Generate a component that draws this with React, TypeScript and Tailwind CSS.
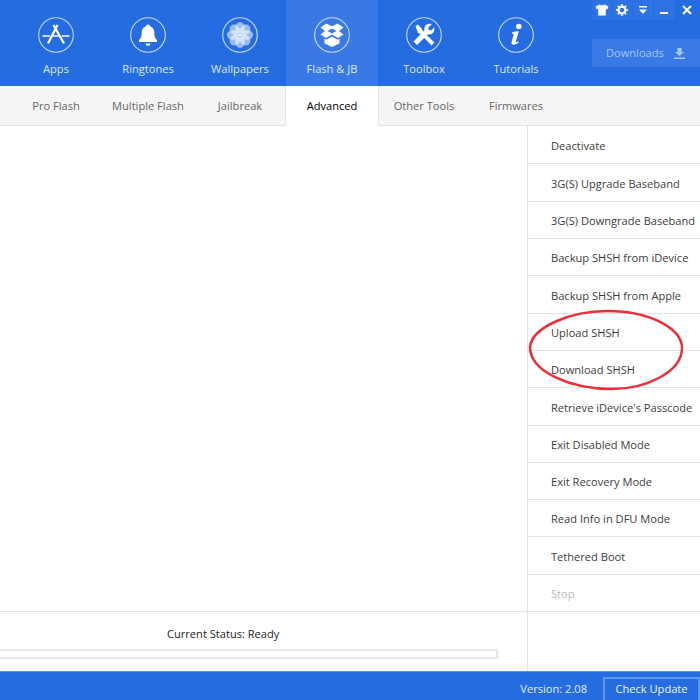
import type { ReactNode } from "react"

const font = "font-['Open_Sans','Noto_Sans',sans-serif]"

function Ring({ children }: { children: ReactNode }) {
  return (
    <svg viewBox="0 0 36 36" className="h-9 w-9">
      <circle cx="18" cy="18" r="17.3" fill="none" stroke="#c4d8f8" strokeWidth="1.1" />
      {children}
    </svg>
  )
}

const AppsIcon = (
  <Ring>
    <path d="M19.5 8 10 26.500M15.500 8 26 26.500" stroke="#fff" strokeWidth="2.300" fill="none" />
    <path d="M4.500 19h7.500M15 19h6M24 19h7.500" stroke="#fff" strokeWidth="1.600" fill="none" />
  </Ring>
)

const BellIcon = (
  <Ring>
    <path d="M18 7.500c1.200 0 2 .8 2 1.800 3 .9 4.300 3.300 4.300 6.200 0 3.500.7 6 2.700 7.500v2H9v-2c2-1.500 2.700-4 2.700-7.500 0-2.900 1.300-5.300 4.300-6.200 0-1 .8-1.800 2-1.800Z" fill="#fff" />
    <path d="M15.500 26.500h5a2.500 2.200 0 0 1-5 0Z" fill="#fff" />
  </Ring>
)

const FlowerIcon = (
  <Ring>
    {[0, 45, 90, 135, 180, 225, 270, 315].map((a) => (
      <ellipse key={a} cx="18" cy="10.800" rx="4.800" ry="5.800" fill="#fff" fillOpacity="0.55" transform={"rotate(" + a + " 18 18)"} />
    ))}
    <circle cx="18" cy="18" r="3.500" fill="#dbe7fb" fillOpacity="0.5" />
    <circle cx="18" cy="18" r="1.300" fill="#fff" />
  </Ring>
)

const BoxIcon = (
  <Ring>
    <path d="m12.500 6.500 5.500 3 5.500-3 6 4-4.500 3.500 4.500 3.500-5.500 3.500-6-3.500-6 3.500-5.500-3.500 4.500-3.500-4.500-3.500Zm5.500 5-4.500 2.500 4.500 2.500 4.500-2.500Z" fill="#fff" fillRule="evenodd" />
    <path d="m10.500 21.500 2 1.200 5.500-3.200 5.500 3.200 2-1.200v5L18 30l-7.500-3.500Z" fill="#fff" />
  </Ring>
)

const ToolsIcon = (
  <Ring>
    <path d="M9.500 9 12 7.500l4 4.500 1 2.500 11.500 11-3 3-11-11.500-2.500-1Z" fill="#fff" />
    <path d="M28.500 10 25 13.500l-2.300-.5-.5-2.300 3.500-3.500c-2.700-1-5.800.2-7 2.700-.5 1.200-.6 2.500-.3 3.500L7.500 24.500l3.500 3.500 11-10.700c1.100.3 2.400.2 3.500-.3 2.700-1.200 3.500-4.500 2.500-7Z" fill="#fff" />
  </Ring>
)

const InfoIcon = (
  <Ring>
    <circle cx="20.800" cy="9.500" r="2.800" fill="#fff" />
    <path d="M14 15.500c2.200-1 4.500-1.400 6.800-1.300l-2.900 10.300c-.2.900.5 1 1.200.5l1.200-.8.600.8c-1.600 1.700-3.500 2.700-5.300 2.700-1.700 0-2.500-1-2-2.700l2-7.500c.2-.8-.4-1-1.700-.8Z" fill="#fff" />
  </Ring>
)

const navItems = [
  { label: "Apps", icon: AppsIcon },
  { label: "Ringtones", icon: BellIcon },
  { label: "Wallpapers", icon: FlowerIcon },
  { label: "Flash & JB", icon: BoxIcon, active: true },
  { label: "Toolbox", icon: ToolsIcon },
  { label: "Tutorials", icon: InfoIcon },
]

const tabs = ["Pro Flash", "Multiple Flash", "Jailbreak", "Advanced", "Other Tools", "Firmwares"]

const actions = [
  "Deactivate",
  "3G(S) Upgrade Baseband",
  "3G(S) Downgrade Baseband",
  "Backup SHSH from iDevice",
  "Backup SHSH from Apple",
  "Upload SHSH",
  "Download SHSH",
  "Retrieve iDevice's Passcode",
  "Exit Disabled Mode",
  "Exit Recovery Mode",
  "Read Info in DFU Mode",
  "Tethered Boot",
  "Stop",
]

function WindowControls() {
  return (
    <div className="flex h-5 gap-px">
      <div className="flex w-5 items-center justify-center bg-[#2e72e3]">
        <svg viewBox="0 0 14 12" className="h-3 w-3.5">
          <path d="M4.500 0.500 7 1.500l2.500-1 4 2-1.300 3-1.400-.5V11.500H3.200V5L1.800 5.500.5 2.500Z" fill="#fff" />
        </svg>
      </div>
      <div className="flex w-5 items-center justify-center bg-[#2e72e3]">
        <svg viewBox="0 0 14 14" className="h-3.5 w-3.5">
          <path d="M7 1v12M1 7h12M2.800 2.800l8.400 8.400M11.200 2.800l-8.400 8.400" stroke="#e6eefc" strokeWidth="1.800" />
          <circle cx="7" cy="7" r="3.400" fill="#2e72e3" stroke="#fff" strokeWidth="2.200" />
        </svg>
      </div>
      <div className="flex w-5 items-center justify-center bg-[#2e72e3]">
        <svg viewBox="0 0 12 10" className="h-2.5 w-3">
          <path d="M2 1h8v1.500H2Z" fill="#fff" />
          <path d="M2 4.500h8L6 9Z" fill="#fff" />
        </svg>
      </div>
      <div className="flex w-5 items-center justify-center bg-[#2e72e3]">
        <div className="mt-1.5 h-0.5 w-2 bg-white" />
      </div>
      <div className="flex w-[26px] items-center justify-center">
        <svg viewBox="0 0 10 10" className="h-2.5 w-2.5">
          <path d="M1 1l8 8M9 1l-8 8" stroke="#fff" strokeWidth="2" />
        </svg>
      </div>
    </div>
  )
}

export default function App() {
  return (
    <div className={"relative flex h-[700px] w-[700px] flex-col overflow-hidden bg-white text-[11.1px] " + font}>
      <header className="flex h-[86px] shrink-0 bg-[#256ce1] pl-2.5">
        {navItems.map((item) => (
          <div
            key={item.label}
            className={
              "flex w-[92px] flex-col items-center pt-[17px] text-[#dbe7fb] " + (item.active ? "bg-[#3879e6]" : "")
            }
          >
            {item.icon}
            <span className="mt-2 leading-4">{item.label}</span>
          </div>
        ))}
        <div className="ml-auto flex w-[108px] flex-col">
          <WindowControls />
          <div className="mt-[19px] flex h-7 items-center gap-[10px] bg-[#3a7ae6] pl-[14px] pt-px text-[#a9c6f5]">
            <span>Downloads</span>
            <svg viewBox="0 0 11 11" className="h-[11px] w-[11px]">
              <path d="M3.500 0h4v4H10L5.500 8 1 4h2.500ZM0 9.500h11V11H0Z" fill="#a9c6f5" />
            </svg>
          </div>
        </div>
      </header>

      <nav className="flex h-10 shrink-0 border-b border-[#e3e3e3] bg-[#f5f5f5] pl-2.5 text-[#666]">
        {tabs.map((tab) =>
          tab === "Advanced" ? (
            <div
              key={tab}
              className="z-10 -mx-px -mb-px flex w-[94px] items-center justify-center border-x border-[#e3e3e3] bg-white pt-px text-black"
            >
              {tab}
            </div>
          ) : (
            <div key={tab} className="flex w-[92px] items-center justify-center pt-px">
              {tab}
            </div>
          ),
        )}
      </nav>

      <main className="flex min-h-0 flex-1">
        <div className="flex-1" />
        <ul className="flex w-[173px] flex-col border-l border-[#e3e3e3] pt-px">
          {actions.map((action) => (
            <li
              key={action}
              className={
                "flex flex-1 items-center whitespace-nowrap border-b border-[#e3e3e3] pl-[23px] pt-[3px] last:border-b-0 " +
                (action === "Stop" ? "text-[#bbb]" : "text-[#3c3c3c]")
              }
            >
              {action}
            </li>
          ))}
        </ul>
      </main>

      <section className="flex h-[60px] shrink-0 border-t border-[#e3e3e3]">
        <div className="flex-1">
          <p className="pl-[167px] pt-[14px] leading-4 text-[#222]">Current Status: Ready</p>
          <div className="mr-[29px] mt-[7px] h-[10px] border-y-2 border-r-2 border-[#e8e8e8]" />
        </div>
        <div className="w-[173px] border-l border-[#e3e3e3]" />
      </section>

      <footer className="flex h-[29px] shrink-0 items-end justify-end border-t border-[#5b8fe9] bg-[#256ce1] text-[#e4edfc]">
        <span className="mb-[2px] mr-4">Version: 2.08</span>
        <button className="h-[23px] w-[97px] border-2 border-b-0 border-[#5f95ee] pb-px text-center text-[#eef4fe]">
          Check Update
        </button>
      </footer>

      <svg viewBox="0 0 160 86" className="pointer-events-none absolute left-[526px] top-[307px] h-[86px] w-[160px]">
        <path
          d="M4 40C6 20 45 4 81 4c44 0 75 18 75 37 0 24-36 41-70 41C45 82 4 65 4 40Z"
          fill="none"
          stroke="#e8303a"
          strokeWidth="2.500"
        />
      </svg>
    </div>
  )
}
